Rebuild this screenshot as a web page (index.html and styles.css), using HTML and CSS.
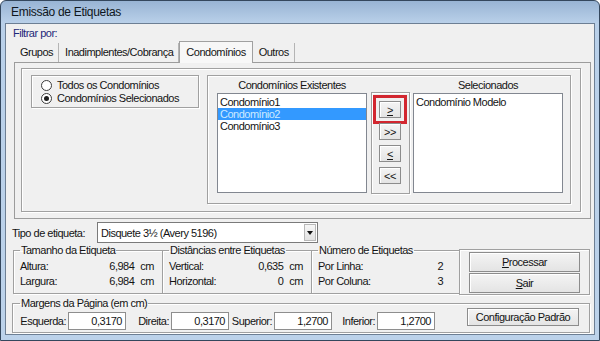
FILE: index.html
```html
<!DOCTYPE html>
<html lang="pt">
<head>
    <meta charset="UTF-8">
    <title>Emissão de Etiquetas</title>
    <link rel="stylesheet" href="styles.css">
</head>
<body>
    <div class="window">
        <div class="titlebar">Emissão de Etiquetas</div>

        <div class="client">
            <div class="filter-label">Filtrar por:</div>

            <div class="tabs">
                <div class="tab">Grupos</div>
                <div class="tab">Inadimplentes/Cobrança</div>
                <div class="tab active">Condomínios</div>
                <div class="tab">Outros</div>
            </div>

            <div class="tab-panel">
                <div class="frame main-frame">
                    <div class="frame radio-box">
                        <label class="radio"><span class="radio-dot"></span>Todos os Condomínios</label>
                        <label class="radio checked"><span class="radio-dot"></span>Condomínios Selecionados</label>
                    </div>

                    <div class="frame lists-frame">
                        <div class="list-col">
                            <div class="list-title">Condomínios Existentes</div>
                            <div class="listbox">
                                <div class="list-item">Condomínio1</div>
                                <div class="list-item selected">Condomínio2</div>
                                <div class="list-item">Condomínio3</div>
                            </div>
                        </div>

                        <div class="frame move-frame">
                            <button class="btn btn-move highlight"><u>&gt;</u></button>
                            <button class="btn btn-move">&gt;&gt;</button>
                            <button class="btn btn-move"><u>&lt;</u></button>
                            <button class="btn btn-move">&lt;&lt;</button>
                        </div>

                        <div class="list-col">
                            <div class="list-title">Selecionados</div>
                            <div class="listbox">
                                <div class="list-item">Condomínio Modelo</div>
                            </div>
                        </div>
                    </div>
                </div>
            </div>

            <div class="type-row">
                <span class="type-label">Tipo de etiqueta:</span>
                <div class="combo">
                    <span class="combo-text">Disquete 3½ (Avery 5196)</span>
                    <span class="combo-arrow"></span>
                </div>
            </div>

            <div class="groups-row">
                <fieldset class="group">
                    <legend>Tamanho da Etiqueta</legend>
                    <div class="value-grid">
                        <span>Altura:</span><span class="num">6,984</span><span>cm</span>
                        <span>Largura:</span><span class="num">6,984</span><span>cm</span>
                    </div>
                </fieldset>
                <fieldset class="group">
                    <legend>Distâncias entre Etiquetas</legend>
                    <div class="value-grid">
                        <span>Vertical:</span><span class="num">0,635</span><span>cm</span>
                        <span>Horizontal:</span><span class="num">0</span><span>cm</span>
                    </div>
                </fieldset>
                <fieldset class="group count">
                    <legend>Número de Etiquetas</legend>
                    <div class="value-grid two">
                        <span>Por Linha:</span><span class="num">2</span>
                        <span>Por Coluna:</span><span class="num">3</span>
                    </div>
                </fieldset>
                <div class="frame action-frame">
                    <button class="btn btn-action"><u>P</u>rocessar</button>
                    <button class="btn btn-action"><u>S</u>air</button>
                </div>
            </div>

            <fieldset class="group margins">
                <legend>Margens da Página (em cm)</legend>
                <div class="margin-row">
                    <span class="m-label first">Esquerda:</span>
                    <span class="m-input">0,3170</span>
                    <span class="m-label">Direita:</span>
                    <span class="m-input">0,3170</span>
                    <span class="m-label">Superior:</span>
                    <span class="m-input">1,2700</span>
                    <span class="m-label">Inferior:</span>
                    <span class="m-input">1,2700</span>
                    <button class="btn btn-default">Configuração Padrão</button>
                </div>
            </fieldset>
        </div>
    </div>
</body>
</html>
```

FILE: styles.css
```css
:root {
    --face: #f0f0f0;
    --edge: #a0a0a0;
    --text: #141414;
    --frame-blue: #bcd2ea;
}

* {
    margin: 0;
    padding: 0;
    box-sizing: border-box;
}

body {
    width: 600px;
    height: 341px;
    overflow: hidden;
    font-family: "Liberation Sans", Arial, sans-serif;
    font-size: 11px;
    letter-spacing: -0.5px;
    color: var(--text);
    background: #fff;
}

/* window chrome */
.window {
    width: 600px;
    height: 341px;
    display: flex;
    flex-direction: column;
    border: 1px solid #34475d;
    border-radius: 6px 6px 0 0;
    background: linear-gradient(to bottom, #98b4d4 0, #b9d0e9 22px, var(--frame-blue) 100%);
    padding: 0 4px 5px;
}

.titlebar {
    height: 22px;
    line-height: 22px;
    padding-left: 6px;
    font-size: 12px;
    letter-spacing: -0.3px;
    color: #0e1620;
}

.client {
    flex: 1;
    display: flex;
    flex-direction: column;
    background: var(--face);
    border: 1px solid #6d7f94;
}

.filter-label {
    padding: 3px 0 0 7px;
    line-height: 13px;
    color: #1d2878;
}

/* tabs */
.tabs {
    display: flex;
    align-items: flex-end;
    height: 19px;
    margin: 3px 0 0 8px;
}

.tab {
    height: 19px;
    line-height: 19px;
    padding: 0 5px 0 6px;
    border-right: 1px solid #b4b4b4;
}

.tab.active {
    height: 22px;
    line-height: 20px;
    margin-bottom: -1px;
    z-index: 1;
    padding: 0 6px;
    background: #f7f7f7;
    border: 1px solid var(--edge);
    border-bottom: none;
}

.tab-panel {
    width: 577px;
    height: 157px;
    margin-left: 8px;
    padding: 5px 0 0 6px;
    border: 1px solid #9c9c9c;
    background: var(--face);
}

/* etched frames */
.frame {
    border: 1px solid var(--edge);
    box-shadow: inset 1px 1px 0 #fff, 1px 1px 0 #fff;
}

.main-frame {
    width: 560px;
    height: 144px;
    display: flex;
    align-items: flex-start;
    gap: 8px;
    padding: 6px 0 0 9px;
}

.radio-box {
    width: 168px;
    height: 33px;
    padding: 3px 0 0 9px;
}

.radio {
    display: flex;
    align-items: center;
    gap: 5px;
    height: 13px;
    line-height: 13px;
}

.radio-dot {
    width: 11px;
    height: 11px;
    border: 1px solid #3c3c3c;
    border-radius: 50%;
    background: #fff;
    display: flex;
    align-items: center;
    justify-content: center;
}

.radio.checked .radio-dot::after {
    content: "";
    width: 5px;
    height: 5px;
    border-radius: 50%;
    background: #1c1c1c;
}

.lists-frame {
    width: 364px;
    height: 129px;
    display: flex;
    align-items: flex-start;
    padding-left: 9px;
}

.list-col {
    width: 150px;
}

.list-title {
    padding-top: 1px;
    height: 17px;
    line-height: 16px;
    text-align: center;
}

.listbox {
    height: 100px;
    padding-top: 2px;
    background: #fff;
    border: 1px solid #828790;
}

.list-item {
    height: 12px;
    line-height: 12px;
    padding-left: 2px;
    white-space: nowrap;
}

.list-item.selected {
    background: #3399ff;
    color: #cdeaff;
}

.move-frame {
    width: 39px;
    height: 102px;
    margin: 16px 3px 0 4px;
    padding: 8px 0 0 7px;
    display: flex;
    flex-direction: column;
    gap: 5px;
}

/* buttons */
.btn {
    font-family: inherit;
    font-size: 11px;
    letter-spacing: inherit;
    color: var(--text);
    background: linear-gradient(to bottom, #f4f4f4, #e4e4e4);
    border: 1px solid #8c8c8c;
    box-shadow: inset 1px 1px 0 #fff;
    cursor: pointer;
}

.btn-move {
    width: 22px;
    height: 17px;
    line-height: 14px;
}

.btn-move.highlight {
    outline: 3px solid #d2262f;
    outline-offset: 3px;
}

/* label type */
.type-row {
    display: flex;
    align-items: center;
    height: 21px;
    margin-top: 3px;
    padding-left: 6px;
}

.type-label {
    width: 85px;
}

.combo {
    width: 221px;
    height: 21px;
    display: flex;
    align-items: center;
    background: #fff;
    border: 1px solid #7a7a7a;
    padding: 1px;
}

.combo-text {
    flex: 1;
    padding-left: 2px;
}

.combo-arrow {
    width: 12px;
    height: 17px;
    background: linear-gradient(to bottom, #f6f6f6, #e2e2e2);
    border: 1px solid #b8b8b8;
    display: flex;
    align-items: center;
    justify-content: center;
}

.combo-arrow::after {
    content: "";
    border-left: 3px solid transparent;
    border-right: 3px solid transparent;
    border-top: 4px solid #111;
}

/* group boxes */
.groups-row {
    display: flex;
    align-items: flex-start;
    margin-left: 7px;
    height: 51px;
}

.group {
    border: 1px solid var(--edge);
    box-shadow: inset 1px 1px 0 #fff, 1px 1px 0 #fff;
    min-width: 0;
}

.group legend {
    line-height: 14px;
    padding: 0 1px;
}

.groups-row .group {
    width: 150px;
    height: 51px;
    padding: 2px 8px 0 6px;
}

.groups-row .group + .group {
    margin-left: -1px;
}

.groups-row .group.count {
    width: 149px;
    padding-right: 16px;
}

.value-grid {
    display: grid;
    grid-template-columns: 1fr auto auto;
    column-gap: 6px;
    line-height: 15px;
}

.value-grid.two {
    grid-template-columns: 1fr auto;
}

.num {
    text-align: right;
}

.action-frame {
    width: 131px;
    height: 46px;
    margin: 6px 0 0 -1px;
    padding: 2px 0 0 9px;
    display: flex;
    flex-direction: column;
    gap: 1px;
}

.btn-action {
    width: 111px;
    height: 20px;
}

/* page margins */
.margins {
    width: 578px;
    height: 37px;
    margin: 2px 0 0 6px;
    padding: 0 10px 0 7px;
}

.margin-row {
    display: flex;
    align-items: flex-start;
}

.m-label {
    width: 45px;
    margin-top: 2px;
    line-height: 18px;
    text-align: right;
    padding-right: 2px;
}

.m-label.first {
    width: 48px;
}

.m-input {
    width: 58px;
    height: 18px;
    margin-top: 2px;
    line-height: 16px;
    text-align: right;
    padding-right: 3px;
    background: #fff;
    border: 1px solid #8e8e8e;
}

.btn-default {
    width: 112px;
    height: 18px;
    margin: -2px 0 0 auto;
}
```
